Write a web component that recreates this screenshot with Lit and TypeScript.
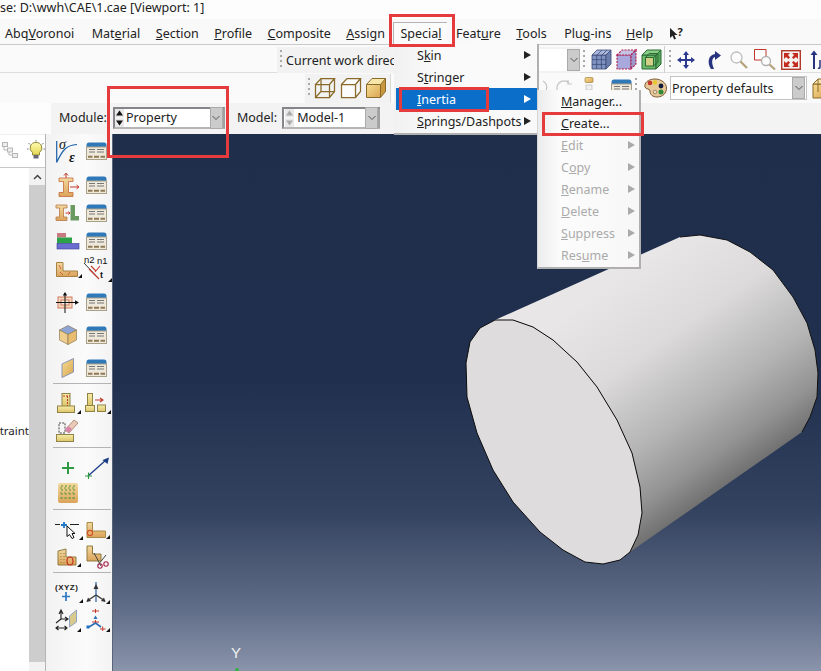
import { LitElement, html, svg, css } from "lit";
import { customElement } from "lit/decorators.js";

const tri = html`<svg class="tri" width="4" height="4" viewBox="0 0 4 4"><path d="M4 0V4H0Z" fill="#111"/></svg>`;

const ic = (w: number, h: number, body: unknown) =>
  html`<svg width=${w} height=${h} viewBox="0 0 ${w} ${h}" fill="none">${body}</svg>`;

const defs = html`<svg width="0" height="0" class="defs"><defs>
  <linearGradient id="gold" x1="0" y1="0" x2="1" y2="1"><stop offset="0" stop-color="#f6dd92"/><stop offset="1" stop-color="#d9a451"/></linearGradient>
  <linearGradient id="tan" x1="0" y1="0" x2="0" y2="1"><stop offset="0" stop-color="#f3d9a0"/><stop offset="1" stop-color="#dba35a"/></linearGradient>
  <linearGradient id="yel" x1="0" y1="0" x2="0" y2="1"><stop offset="0" stop-color="#f7eda9"/><stop offset="1" stop-color="#dcc468"/></linearGradient>
  <linearGradient id="side" gradientUnits="userSpaceOnUse" x1="600" y1="290" x2="734" y2="483"><stop offset="0" stop-color="#e8e6e7"/><stop offset=".33" stop-color="#dcdadb"/><stop offset=".65" stop-color="#b4b4b4"/><stop offset=".85" stop-color="#939393"/><stop offset="1" stop-color="#6e6e6e"/></linearGradient>
  <linearGradient id="bulb" x1="0" y1="0" x2="0" y2="1"><stop offset="0" stop-color="#fffbb0"/><stop offset="1" stop-color="#e4d650"/></linearGradient>
</defs></svg>`;

const table = ic(21, 18, svg`
  <path d="M.5 3Q.5.5 3 .5H18Q20.5.5 20.5 3V5H.5Z" fill="#2f79b9"/>
  <rect x=".5" y="5" width="20" height="12.5" fill="#efe9db" stroke="#a9a08a"/>
  <path d="M3 7.5H9M11 7.5H18M3 10H9M11 10H18" stroke="#777" stroke-width="1"/>
  <path d="M2 14.8H6.5M8 14.8H13M14.5 14.8H19" stroke="#8f7a55" stroke-width="2"/>`);

const wire = ic(22, 22, svg`<g stroke="#8a6a2a" stroke-width="1.25">
  <path d="M1.5 7.5H15.5V20.5H1.5ZM1.5 7.5L7 1.5H20.5L15.5 7.5M20.5 1.5V14.5L15.5 20.5"/>
  <path d="M7 1.5V14.5H20.5M7 14.5L1.5 20.5"/></g>`);
const hollow = ic(22, 22, svg`<path d="M1.5 7.5H15.5V20.5H1.5ZM1.5 7.5L7 1.5H20.5L15.5 7.5M20.5 1.5V14.5L15.5 20.5" stroke="#8a6a2a" stroke-width="1.25" fill="#fbfbfb"/>`);
const solid = ic(22, 22, svg`
  <path d="M1.5 7.5H15.5V20.5H1.5Z" fill="url(#gold)"/><path d="M1.5 7.5L7 1.5H20.5L15.5 7.5Z" fill="#f7e6a8"/><path d="M20.5 1.5V14.5L15.5 20.5V7.5Z" fill="#c9973f"/>
  <path d="M1.5 7.5H15.5V20.5H1.5ZM1.5 7.5L7 1.5H20.5L15.5 7.5M20.5 1.5V14.5L15.5 20.5" stroke="#8a6a2a"/>`);
const mesh = ic(21, 21, svg`<g stroke="#3c4a78" stroke-width=".8">
  <path d="M1 6H15V20H1Z" fill="#8094c2"/><path d="M1 6L6 1H20L15 6Z" fill="#a9b8da"/><path d="M20 1V15L15 20V6Z" fill="#6b7dad"/>
  <path d="M5.7 6V20M10.4 6V20M1 10.7H15M1 15.4H15M6 6L11 1M11 6L16 1"/></g>`);
const redcube = ic(21, 21, svg`<g stroke="#b01848" stroke-width="1.1" stroke-dasharray="2 1.2">
  <path d="M1 6H15V20H1Z" fill="#a9a8dc"/><path d="M1 6L6 1H20L15 6Z" fill="#c5c3e4"/><path d="M20 1V15L15 20V6Z" fill="#9a98cc"/></g>`);
const greencube = ic(21, 21, svg`<g stroke="#2a6b34" stroke-width="1">
  <path d="M1 6H15V20H1Z" fill="#6dba6c"/><path d="M1 6L6 1H20L15 6Z" fill="#8bcc88"/><path d="M20 1V15L15 20V6Z" fill="#5aa95c"/>
  <path d="M4.5 8.5H12.5V17H4.5Z" fill="#d3cf86"/><path d="M4.5 8.5L8 4.5H17V13L12.5 17M12.5 8.5L17 4.5"/></g>`);
const move = ic(20, 20, svg`<path d="M10 1L13 5H11V9H15V7L19 10L15 13V11H11V15H13L10 19L7 15H9V11H5V13L1 10L5 7V9H9V5H7Z" fill="#2c3a90"/>`);
const rotate = ic(16, 20, svg`<path d="M5 19C1 13 2 5 9 4V1L15 5.5L9 10V7C6 8 5 12 8 19Z" fill="#27337f"/>`);
const lens = ic(18, 18, svg`<circle cx="6.5" cy="6.5" r="5.5" fill="#fdfdfd" stroke="#bdbdbd" stroke-width="1.3"/><path d="M10.5 10.5L17 17" stroke="#b5a37e" stroke-width="2.3"/>`);
const boxzoom = ic(22, 21, svg`<path d="M.5.5H12V11H.5Z" stroke="#c0362c" fill="#fff"/><circle cx="12" cy="12" r="4.5" fill="#fdfdfd" stroke="#b0b0b0" stroke-width="1.3"/><path d="M15.5 15.5L21 20.5" stroke="#b5a37e" stroke-width="2.3"/>`);
const fit = ic(20, 20, svg`<rect x=".7" y=".7" width="18.6" height="18.6" fill="#f6f0ee" stroke="#b03a2c" stroke-width="1.4"/>
  <g fill="#c22b1d"><path d="M3 3H9L7 5L9 7.5L7.5 9L5 7L3 9ZM17 3V9L15 7L12.5 9L11 7.5L13 5L11 3ZM3 17V11L5 13L7.5 11L9 12.5L7 15L9 17ZM17 17H11L13 15L11 12.5L12.5 11L15 13L17 11Z"/></g>`);
const nextv = ic(11, 20, svg`<path d="M4 19V5H1.5L5 .5L8.5 5H6V19Z" fill="#27337f"/><path d="M11 10V17Q11 19 9 18" stroke="#27337f" stroke-width="1.5"/>`);
const help = html`<span class="helpq">${ic(9, 13, svg`<path d="M1 1V11L3.5 8.8L5.2 12.5L7 11.7L5.3 8H8.5Z" fill="#222"/>`)}<b>?</b></span>`;
const palette = ic(23, 20, svg`<path d="M11 1C4 1 0 5 1 9C2 12 6 10 6 13C6 17 9 19 13 19C19 19 22.5 15 22.5 10C22.5 5 17 1 11 1Z" fill="#e7c89a" stroke="#7b5a35"/>
  <circle cx="6" cy="5" r="2.3" fill="#c5342a"/><circle cx="11" cy="4.5" r="2.3" fill="#e8c92d"/><circle cx="17" cy="8" r="2.4" fill="#111b3c"/><circle cx="17" cy="14" r="2.5" fill="#2e8b3a"/><circle cx="11" cy="14" r="1.8" fill="#e9dfc9" stroke="#7b5a35" stroke-width=".6"/>`);
const stack = ic(10, 22, svg`<rect x="1" y=".5" width="8" height="5" rx="1" fill="url(#gold)" stroke="#a08442" stroke-width=".7"/><rect x="2" y="8" width="6" height="5" fill="#f0f0f0" stroke="#bbb" stroke-width=".7"/><rect x="1" y="15" width="8" height="6" rx="1" fill="url(#gold)" stroke="#a08442" stroke-width=".7"/>`);
const arcs = ic(38, 20, svg`<path d="M1 16A7 7 0 0 0 6 3" stroke="#c4c4c4" stroke-width="1.2"/><path d="M22 15A7 7 0 0 1 32 5M31 2V6H35" stroke="#c4c4c4" stroke-width="1.2"/>`);
const sideCube = html`<span class="clipcube">${ic(22, 21, svg`<path d="M1 6H15V20H1Z" fill="url(#gold)" stroke="#8a6a2a"/><path d="M1 6L6 1H20L15 6ZM6 1V14" fill="#f5e3a8" stroke="#8a6a2a"/>`)}</span>`;
const tree = ic(16, 16, svg`<g stroke="#b5b5b5" fill="#ededed"><rect x=".5" y=".5" width="5" height="4"/><rect x="5.5" y="6" width="5" height="4"/><rect x="10.5" y="11.5" width="5" height="4"/><path d="M2 5V8H5M7 10V13H10" fill="none"/></g>`);
const bulb = ic(18, 20, svg`<path d="M9 2.5A5.5 5.5 0 0 0 5.5 12.5V15H12.5V12.5A5.5 5.5 0 0 0 9 2.5Z" fill="url(#bulb)" stroke="#8f8a3a"/><rect x="6.5" y="15" width="5" height="3.5" fill="#667"/><path d="M9 0V1.5M1.5 3L3 4.5M16.5 3L15 4.5M0 9H1.5M18 9H16.5" stroke="#555" stroke-width=".8"/>`);

const curve = ic(23, 23, svg`<path d="M.7 1V22.4M.7 22.4C5 14 8 5 21 4.5" stroke="#1a5fa8" stroke-width="1.2"/>
  <text x="3" y="9" font-family="Liberation Serif" font-style="italic" font-size="14" fill="#111">σ</text><text x="13" y="22" font-family="Liberation Serif" font-style="italic" font-weight="700" font-size="14" fill="#111">ε</text>`);
const ibeamArrow = ic(23, 24, svg`<path d="M3 5H17V8.5H12.5V19.5H17V23.5H3V19.5H7.5V8.5H3Z" fill="url(#tan)" stroke="#c56a3a" stroke-width=".8"/><path d="M10 0V5M8 2.5L10 .3L12 2.5M14 14H23M20.5 12L23 14L20.5 16" stroke="#c23a2c" stroke-width="1"/>`);
const ibeamL = ic(23, 18, svg`<path d="M0 1H11V4H7.5V13H11V16.5H0V13H3.5V4H0Z" fill="url(#tan)" stroke="#b77a45" stroke-width=".8"/><path d="M14.5 1H19V12H23V16.5H14.5Z" fill="#6a9a62"/><path d="M9.5 9H14M12.5 7.5L14 9L12.5 10.5" stroke="#c23a2c"/>`);
const bars = ic(22, 16, svg`<rect x="0" y="0" width="9" height="4.5" fill="#c97a80"/><rect x="0" y="4.5" width="15" height="6" fill="#2da14a"/><rect x="0" y="10.5" width="22" height="5.5" fill="#6a6ccf" stroke="#3b3d9a" stroke-width=".6"/>`);
const angle = html`<span class="wrap">${ic(22, 15, svg`<path d="M.5.5H7V9H21.5V14.5H.5Z" fill="url(#tan)" stroke="#a88242"/><path d="M3 3L5 7M4 10L7 13M14 10L12 13" stroke="#c8502e" stroke-width=".8"/>`)}${tri}</span>`;
const normals = html`<span class="wrap">${ic(24, 24, svg`<path d="M0 6L15 22" stroke="#222" stroke-width=".9"/><path d="M5 12L15 22M11 15L16 9M7 9L12 14" stroke="#c23a2c" stroke-width="1.1"/>
  <text x="0" y="6" font-size="9.5" font-family="Liberation Sans" fill="#111">n2</text><text x="13" y="7" font-size="9.5" font-family="Liberation Sans" fill="#111">n1</text><text x="16" y="21" font-size="9" font-weight="700" font-family="Liberation Sans" fill="#111">t</text>`)}${tri}</span>`;
const crossSec = ic(23, 21, svg`<rect x="2" y="5" width="14" height="11" fill="#f5d7c2" stroke="#cf7d5c"/><rect x="5" y="8" width="8" height="5" fill="#fbf0e4" stroke="#cf7d5c"/><path d="M9 1V21M0 10.5H21" stroke="#111"/><path d="M6.8 3.5L9 0L11.2 3.5ZM19 8.3L23 10.5L19 12.7Z" fill="#111"/>`);
const hexCube = ic(18, 20, svg`<path d="M9 .5L17.5 5L9 9.5L.5 5Z" fill="#8ea3d6" stroke="#8b7a55" stroke-width=".7"/><path d="M.5 5L9 9.5V19.5L.5 15Z" fill="#f0cf8e" stroke="#8b7a55" stroke-width=".7"/><path d="M17.5 5L9 9.5V19.5L17.5 15Z" fill="#e8bd70" stroke="#8b7a55" stroke-width=".7"/>`);
const shell = ic(13, 20, svg`<path d="M1 6L12.5.5V14L1 19.5Z" fill="url(#gold)" stroke="#7e8fb5" stroke-width=".9"/>`);
const post1 = html`<span class="wrap">${ic(20, 20, svg`<rect x="5" y=".5" width="8" height="13" fill="url(#yel)" stroke="#8f8347"/><path d="M10.5 3V13M6 3H13" stroke="#c23a2c" stroke-dasharray="2 1"/><rect x=".5" y="13" width="17" height="6.5" fill="url(#yel)" stroke="#8f8347"/>`)}${tri}</span>`;
const post2 = html`<span class="wrap">${ic(22, 20, svg`<rect x="2.5" y=".5" width="5" height="12" fill="url(#yel)" stroke="#8f8347"/><rect x=".5" y="12.5" width="9" height="6" fill="url(#yel)" stroke="#8f8347"/><rect x="12.5" y="12" width="8" height="6.5" fill="url(#yel)" stroke="#8f8347"/><path d="M10 7H17M15 5L18 7L15 9" stroke="#c23a2c" stroke-width="1.1"/>`)}${tri}</span>`;
const eraser = ic(23, 24, svg`<path d="M3 5H9V15H3Z" stroke="#444" stroke-dasharray="2 1.2"/><path d="M9 12L18 2L22 5L13 15Z" fill="#e9c9b8" stroke="#b89080"/><path d="M9 12L12 8L16 11L13 15Z" fill="#d785a8"/><rect x=".5" y="16.5" width="17" height="7" fill="url(#yel)" stroke="#8f8347"/>`);
const plus = ic(12, 12, svg`<path d="M6 0V12M0 6H12" stroke="#2f9a42" stroke-width="2"/>`);
const wireArr = ic(24, 22, svg`<path d="M3 19L21 3" stroke="#1c3d86" stroke-width="1.4"/><path d="M24 .5L22.5 7L17.5 3Z" fill="#1c3d86"/><path d="M0 19H7M3.5 15.5V22" stroke="#2f9a42" stroke-width="1.1"/>`);
const partition = ic(20, 20, svg`<rect width="20" height="20" rx="2" fill="url(#tan)"/><path d="M4 2V18M8 2V18M12 2V18M16 2V18M2 5H18M2 10H18M2 15H18" stroke="#6f9c3c" stroke-width="1.2" stroke-dasharray="2 2"/>`);
const pick = html`<span class="wrap">${ic(24, 17, svg`<path d="M0 2.5H5M15 2.5H24" stroke="#222"/><path d="M9 0V6M6 3H12" stroke="#1e78c8" stroke-width="1.8"/><path d="M12 4V14.5L14.5 12.5L17 16.5L19 15.5L17 11.5H20Z" fill="#fff" stroke="#111"/>`)}${tri}</span>`;
const lRound = html`<span class="wrap">${ic(20, 16, svg`<path d="M1 .5H6.5V9H19.5V15.5H1Z" fill="url(#tan)" stroke="#a58a45"/><circle cx="4" cy="11" r="2.6" stroke="#d2502a" stroke-width="1.1"/>`)}${tri}</span>`;
const lDots = html`<span class="wrap">${ic(20, 18, svg`<path d="M1 3L9 1V9H19V17H1Z" fill="url(#tan)" stroke="#8f7a3f"/><path d="M4 5V15M7 5V15" stroke="#8f7a3f" stroke-dasharray="1 2"/><ellipse cx="13" cy="13" rx="3" ry="4" stroke="#c8321f" stroke-width="1.2"/>`)}${tri}</span>`;
const scissors = ic(22, 24, svg`<path d="M1 1H6.5V9H15V16H1Z" fill="url(#tan)" stroke="#8f7a3f"/><path d="M8 8L15 21M20 10L12 20" stroke="#444"/><circle cx="14" cy="21" r="2.2" stroke="#a8234b" stroke-width="1.1"/><circle cx="20" cy="19" r="2.2" stroke="#a8234b" stroke-width="1.1"/>`);
const xyz = html`<span class="wrap">${ic(24, 20, svg`<text x="0" y="8" font-size="8" letter-spacing=".5" font-family="Liberation Sans" font-weight="700" fill="#222">(XYZ)</text><path d="M11 10V19M7 14.5H15" stroke="#2d78c4" stroke-width="1.7"/>`)}${tri}</span>`;
const axes = html`<span class="wrap">${ic(20, 21, svg`<path d="M10 0V20" stroke="#2e5d9c" stroke-width="1.2"/><path d="M10 13L1 19M10 13L19 19" stroke="#333" stroke-width="1.2"/><path d="M7.5 7L10 2L12.5 7ZM.5 20L2 15.5L5 19ZM19.5 20L18 15.5L15 19Z" fill="#333"/>`)}${tri}</span>`;
const datum = html`<span class="wrap">${ic(21, 22, svg`<path d="M13.5 7L20.5 1V13L13.5 18Z" fill="#d8c98c" stroke="#90a6c4"/><path d="M5 3V10M5 10L0 14M5 10H11M3 5L5 1L7 5M9 8L12 10L9 12" stroke="#222" stroke-width="1.1"/><path d="M0 19H11M2.5 17L0 19L2.5 21M8.5 17L11 19L8.5 21" stroke="#222" stroke-width="1.1"/>`)}${tri}</span>`;
const tripod = html`<span class="wrap">${ic(20, 22, svg`<path d="M6 2H13M9.5 0V4" stroke="#c23a2c" stroke-width="1"/><path d="M7.5 10L9.5 6.5L11.5 10Z" fill="#2c6fb5"/><path d="M6 13H13M9.5 11V15M14 20H19.5M16.7 17.5V22" stroke="#c23a2c"/><path d="M9.5 14L3 18M9.5 14L15 18" stroke="#2c6fb5" stroke-width="1.6"/><rect x=".5" y="16.5" width="3" height="3" fill="#1e6fc0"/>`)}${tri}</span>`;

type Row = { gap: number; a?: unknown; b?: unknown; sep?: boolean };
const rows: Row[] = [
  { gap: 0, a: curve, b: table },
  { gap: 6, a: ibeamArrow, b: table },
  { gap: 0, a: ibeamL, b: table },
  { gap: 0, a: bars, b: table },
  { gap: 0, a: angle, b: normals },
  { gap: 5, a: crossSec, b: table },
  { gap: 5, a: hexCube, b: table },
  { gap: 5, a: shell, b: table },
  { gap: 1, sep: true },
  { gap: 5, a: post1, b: post2 },
  { gap: -1, a: eraser },
  { gap: 3, sep: true },
  { gap: 6, a: plus, b: wireArr },
  { gap: -3, a: partition },
  { gap: 2, sep: true },
  { gap: 6, a: pick, b: lRound },
  { gap: -1, a: lDots, b: scissors },
  { gap: 1, sep: true },
  { gap: 5, a: xyz, b: axes },
  { gap: 0, a: datum, b: tripod },
];

const front = "495,320 513,320 533,327 553,340 577,362 597,387 617,420 632,453 640,487 642,513 638,535 630,552 620,560 603,564 585,562 563,550 540,532 513,502 493,470 477,433 467,397 466,363 470,342 480,328";
const side = "495,320 680,237 700,235 727,240 750,252 773,270 793,297 807,323 815,350 818,373 817,397 810,417 802,432 630,552 642,513 640,487 632,453 617,420 597,387 577,362 553,340 533,327 513,320";

@customElement("app-root")
export class AppRoot extends LitElement {
  static styles = css`
    :host { display: block; width: 821px; height: 671px; overflow: hidden; position: relative; background: #fdfdfd;
      font-family: "Noto Sans", sans-serif; font-size: 12.5px; color: #222; }
    .defs { position: absolute; }
    svg { display: block; flex: none; overflow: visible; }
    u { text-underline-offset: 1px; text-decoration-thickness: 1px; }
    .title { height: 19px; line-height: 15px; white-space: pre; font-size: 12.5px; }
    .menubar { height: 26px; box-sizing: border-box; display: flex; align-items: center; gap: 15.5px; padding: 3px 0 0 5px;
      background: #f9f9f9; border-bottom: 1px solid #c9c9c9; white-space: nowrap; }
    .first { margin-right: 2px; }
    .plug { margin-left: 2px; margin-right: -1px; }
    .pressed { align-self: flex-end; height: 22px; line-height: 22px; margin: 0 -7px -1px; padding: 0 6px;
      border-top: 1px solid #b4b4b4; border-left: 1px solid #b4b4b4; background: #fbfbfb; }
    .helpq { display: flex; align-items: center; gap: 0; font-size: 11px; }
    .helpq b { margin-top: -3px; }
    .row { display: flex; align-items: center; background: #fafafa; }
    .rowa { height: 28px; padding: 2px 0 0 277px; border-bottom: 1px solid #dedede; box-sizing: border-box; }
    .rowb { height: 30px; padding-left: 305px; }
    .rowc { height: 31px; margin-left: 51px; padding: 0 0 2px 8px; box-sizing: border-box; background: #f3f3f3; }
    .grip { width: 2px; height: 20px; flex: none; background: repeating-linear-gradient(#a9a9a9 0 2px, transparent 2px 5px); margin: 0 5px 0 3px; }
    .cwd { display: flex; align-items: center; height: 26px; width: 303px; flex: none; background: #f2f2f2; overflow: hidden; }
    .cwd .grip { margin-right: 4px; }
    .cwd .lbl { flex: none; width: 109px; white-space: nowrap; overflow: hidden; padding-top: 1px; }
    .cwd .field { flex: 1; height: 22px; background: #fff; display: flex; justify-content: flex-end; }
    .arrow { width: 11px; height: 20px; background: #cbcbcb; border: 1px solid #aaa; flex: none; display: flex; align-items: center; justify-content: center; box-sizing: content-box; }
    .g3 { display: flex; align-items: center; gap: 4px; height: 27px; margin-left: 1px; }
    .vsep { width: 1px; height: 27px; background: #cfcfcf; margin: 0 1px 0 2px; flex: none; }
    .nav { display: flex; align-items: center; }
    .n10 { margin-left: 10px; }
    .n9 { margin-left: 8px; }
    .n7 { margin-left: 6px; }
    .n6 { margin-left: 5px; }
    .n8 { margin-left: 8px; }
    .cubes { display: flex; align-items: center; gap: 3.5px; height: 29px; width: 86px; background: #f2f2f2; border-right: 1px solid #d8d8d8; box-sizing: border-box; flex: none; }
    .cubes .grip { margin: 0 .5px 0 3px; }
    .hidden-gap { width: 146px; flex: none; }
    .m20 { margin-left: 9px; }
    .m17 { margin-left: 17px; }
    .m3 { margin-left: 2px; }
    .pd { margin-left: 3px; width: 137px; height: 24px; box-sizing: border-box; background: #fff; border: 1px solid #c4c4c4; display: flex; align-items: center; justify-content: space-between; padding: 0 1px 0 1px; white-space: nowrap; flex: none; }
    .pd .arrow { height: 20px; }
    .m6 { margin-left: 5px; }
    .clipcube { display: block; width: 11px; overflow: hidden; }
    .lab { flex: none; white-space: nowrap; }
    .combo { height: 22px; box-sizing: border-box; border: 2px solid #85858a; border-right-color: #a0a0a0; border-bottom-color: #b5b5b5; background: #fff; display: flex; align-items: center; flex: none; white-space: nowrap; }
    .c1 { width: 112px; margin-left: 6px; }
    .c2 { width: 98px; margin-left: 5px; }
    .c2 .spin { margin: 0 3px 0 1px; }
    .m237 { margin-left: 12px; }
    .spin { width: 9px; height: 18px; flex: none; margin: 0 2px 0 0; }
    .combo .txt { flex: 1; }
    .main { height: 537px; display: flex; }
    .left { width: 113px; flex: none; display: flex; background: #fff; }
    .tree { width: 46px; flex: none; display: flex; flex-direction: column; border-right: 1px solid #b5b5b5; box-sizing: border-box; }
    .treetop { height: 34px; flex: none; box-sizing: border-box; border-bottom: 1px solid #c9c9c9; border-top: 1px solid #eee; display: flex; align-items: center; gap: 9px; padding: 0 0 2px 2px; }
    .treebody { flex: 1; display: flex; justify-content: space-between; }
    .trunc { width: 29px; overflow: hidden; direction: rtl; white-space: nowrap; padding-top: 255px; font-size: 11.5px; }
    .sb { width: 16px; display: flex; flex-direction: column; background: #f2f2f2; }
    .sb .up { height: 17px; flex: none; display: flex; align-items: center; justify-content: center; }
    .sb .thumb { height: 477px; flex: none; background: #cdcdcd; }
    .box { width: 67px; flex: none; background: linear-gradient(90deg,#f2f2f2,#fbfbfb 60%,#f3f3f3); padding: 3px 0 0 0; box-sizing: border-box; border-right: 1px solid #5a6478; }
    .tr { height: 28px; display: grid; grid-template-columns: 29px 29px; align-items: center; justify-items: center; padding-left: 7px; box-sizing: border-box; }
    .wrap { position: relative; display: block; padding-right: 2px; }
    .tri { position: absolute; right: -2px; bottom: -1px; }
    .sep { height: 1px; background: #b4b4b4; margin-left: 7px; width: 58px; }
    .view { flex: 1; position: relative; background: linear-gradient(180deg,#1e2e4b 0,#1f2f4d 45%,#33425f 70%,#5f6c87 88%,#8a94ab 100%); overflow: hidden; }
    .scene { position: absolute; left: 0; top: 0; }
    .ylabel { position: absolute; left: 118px; top: 510px; color: #f2f2f2; font-size: 15px; font-family: "Liberation Sans", sans-serif; }
    .ydot { position: absolute; left: 122px; top: 534px; width: 4px; height: 4px; border-radius: 50%; background: #38b14a; }
    .menu { position: absolute; box-sizing: border-box; background: linear-gradient(90deg,#f1f1f1,#fafafa 30%,#f9f9f9); border-right: 2px solid #b0b0b0; border-bottom: 2px solid #b0b0b0; }
    .m1 { left: 394px; top: 44px; width: 145px; height: 91px; padding-left: 2px; }
    .m2 { left: 537px; top: 90px; width: 104px; height: 179px; background: linear-gradient(90deg,#ececec,#fcfcfc 22%,#f7f7f7); border-left: 1px solid #d5d5d5; }
    .mi { height: 22px; display: flex; align-items: center; justify-content: space-between; white-space: nowrap; }
    .m1 .mi { padding: 0 6px 0 21px; height: 22px; }
    .m2 .mi { padding: 0 4px 0 23px; }
    .mi.sel { background: #0b6fca; color: #fff; }
    .mi.dis { color: #aaa; }
    .ar { width: 0; height: 0; border-left: 7px solid currentColor; border-top: 4px solid transparent; border-bottom: 4px solid transparent; }
    .dis .ar { border-left-color: #aaa; }
    .red { position: absolute; box-sizing: border-box; border: 3px solid #e63b3d; pointer-events: none; }
    .r1 { left: 389px; top: 14px; width: 66px; height: 33px; }
    .r2 { left: 399px; top: 87px; width: 90px; height: 25px; }
    .r3 { left: 542px; top: 112px; width: 102px; height: 24px; }
    .r4 { left: 107px; top: 86px; width: 122px; height: 72px; }
  `;

  chev() { return html`<svg width="8" height="6" viewBox="0 0 8 6"><path d="M.5 1L4 4.5L7.5 1" fill="none" stroke="#555"/></svg>`; }
  spin(dark: boolean) {
    const c = dark ? "#111" : "#aaa";
    return html`<svg class="spin" viewBox="0 0 9 18"><rect width="9" height="8.5" fill="#e8e8e8"/><rect y="9.5" width="9" height="8.5" fill="#e8e8e8"/><path d="M4.5 1.5L8 6.5H1Z" fill=${c}/><path d="M4.5 16.5L8 11.5H1Z" fill=${c}/></svg>`;
  }

  render() {
    return html`${defs}
      <div class="title">se: D:\\wwh\\CAE\\1.cae [Viewport: 1]</div>
      <div class="menubar">
        <span class="first">Abq<u>V</u>oronoi</span><span>Mat<u>e</u>rial</span><span><u>S</u>ection</span><span><u>P</u>rofile</span><span><u>C</u>omposite</span><span><u>A</u>ssign</span>
        <span class="pressed">Specia<u>l</u></span><span>Feat<u>u</u>re</span><span><u>T</u>ools</span><span class="plug">Plu<u>g</u>-ins</span><span><u>H</u>elp</span>${help}
      </div>
      <div class="row rowa">
        <div class="cwd"><span class="grip"></span><span class="lbl">Current work direc</span>
          <span class="field"><span class="arrow">${this.chev()}</span></span></div>
        <span class="grip"></span>
        <div class="g3">${mesh}${redcube}${greencube}</div>
        <span class="vsep"></span><span class="grip"></span>
        <div class="nav">${move}<span class="n10">${rotate}</span><span class="n9">${lens}</span><span class="n7">${boxzoom}</span><span class="n6">${fit}</span><span class="n8">${nextv}</span></div>
      </div>
      <div class="row rowb">
        <div class="cubes"><span class="grip"></span>${wire}${hollow}${solid}</div>
        <span class="hidden-gap"></span>
        ${arcs}<span class="m20">${stack}</span><span class="m17">${table}</span>
        <span class="grip"></span><span class="m3">${palette}</span>
        <div class="pd"><span>Property defaults</span><span class="arrow">${this.chev()}</span></div>
        <span class="m6">${sideCube}</span>
      </div>
      <div class="row rowc">
        <span class="lab">Module:</span>
        <div class="combo c1">${this.spin(true)}<span class="txt">Property</span><span class="arrow">${this.chev()}</span></div>
        <span class="lab m237">Model:</span>
        <div class="combo c2">${this.spin(false)}<span class="txt">Model-1</span><span class="arrow">${this.chev()}</span></div>
      </div>
      <div class="main">
        <div class="left">
          <div class="tree">
            <div class="treetop">${tree}${bulb}</div>
            <div class="treebody">
              <div class="trunc">traint</div>
              <div class="sb"><div class="up"><svg width="9" height="6" viewBox="0 0 9 6"><path d="M1 5L4.5 1.5L8 5" fill="none" stroke="#444" stroke-width="1.5"/></svg></div><div class="thumb"></div></div>
            </div>
          </div>
          <div class="box">
            ${rows.map((r) => r.sep
              ? html`<div class="sep" style="margin-top:${r.gap}px"></div>`
              : html`<div class="tr" style="margin-top:${r.gap}px"><span>${r.a}</span><span>${r.b ?? ""}</span></div>`)}
          </div>
        </div>
        <div class="view">
          <svg class="scene" width="708" height="537" viewBox="113 134 708 537">
            <polygon points=${side} fill="url(#side)"/>
            <polyline points="680,237 700,235 727,240 750,252 773,270 793,297 807,323 815,350 818,373 817,397 810,417 802,432" fill="none" stroke="#111" stroke-width="1"/>
            <polygon points=${front} fill="#dedcdd" stroke="#0c0c0c" stroke-width="1"/>
          </svg>
          <span class="ylabel">Y</span><span class="ydot"></span>
        </div>
      </div>
      <div class="menu m1">
        <div class="mi"><span>S<u>k</u>in</span><i class="ar"></i></div>
        <div class="mi"><span>S<u>t</u>ringer</span><i class="ar"></i></div>
        <div class="mi sel"><span><u>I</u>nertia</span><i class="ar"></i></div>
        <div class="mi"><span><u>S</u>prings/Dashpots</span><i class="ar"></i></div>
      </div>
      <div class="menu m2">
        <div class="mi"><span><u>M</u>anager...</span></div>
        <div class="mi"><span><u>C</u>reate...</span></div>
        <div class="mi dis"><span><u>E</u>dit</span><i class="ar"></i></div>
        <div class="mi dis"><span>C<u>o</u>py</span><i class="ar"></i></div>
        <div class="mi dis"><span><u>R</u>ename</span><i class="ar"></i></div>
        <div class="mi dis"><span><u>D</u>elete</span><i class="ar"></i></div>
        <div class="mi dis"><span><u>S</u>uppress</span><i class="ar"></i></div>
        <div class="mi dis"><span>Res<u>u</u>me</span><i class="ar"></i></div>
      </div>
      <div class="red r1"></div><div class="red r2"></div><div class="red r3"></div><div class="red r4"></div>`;
  }
}
